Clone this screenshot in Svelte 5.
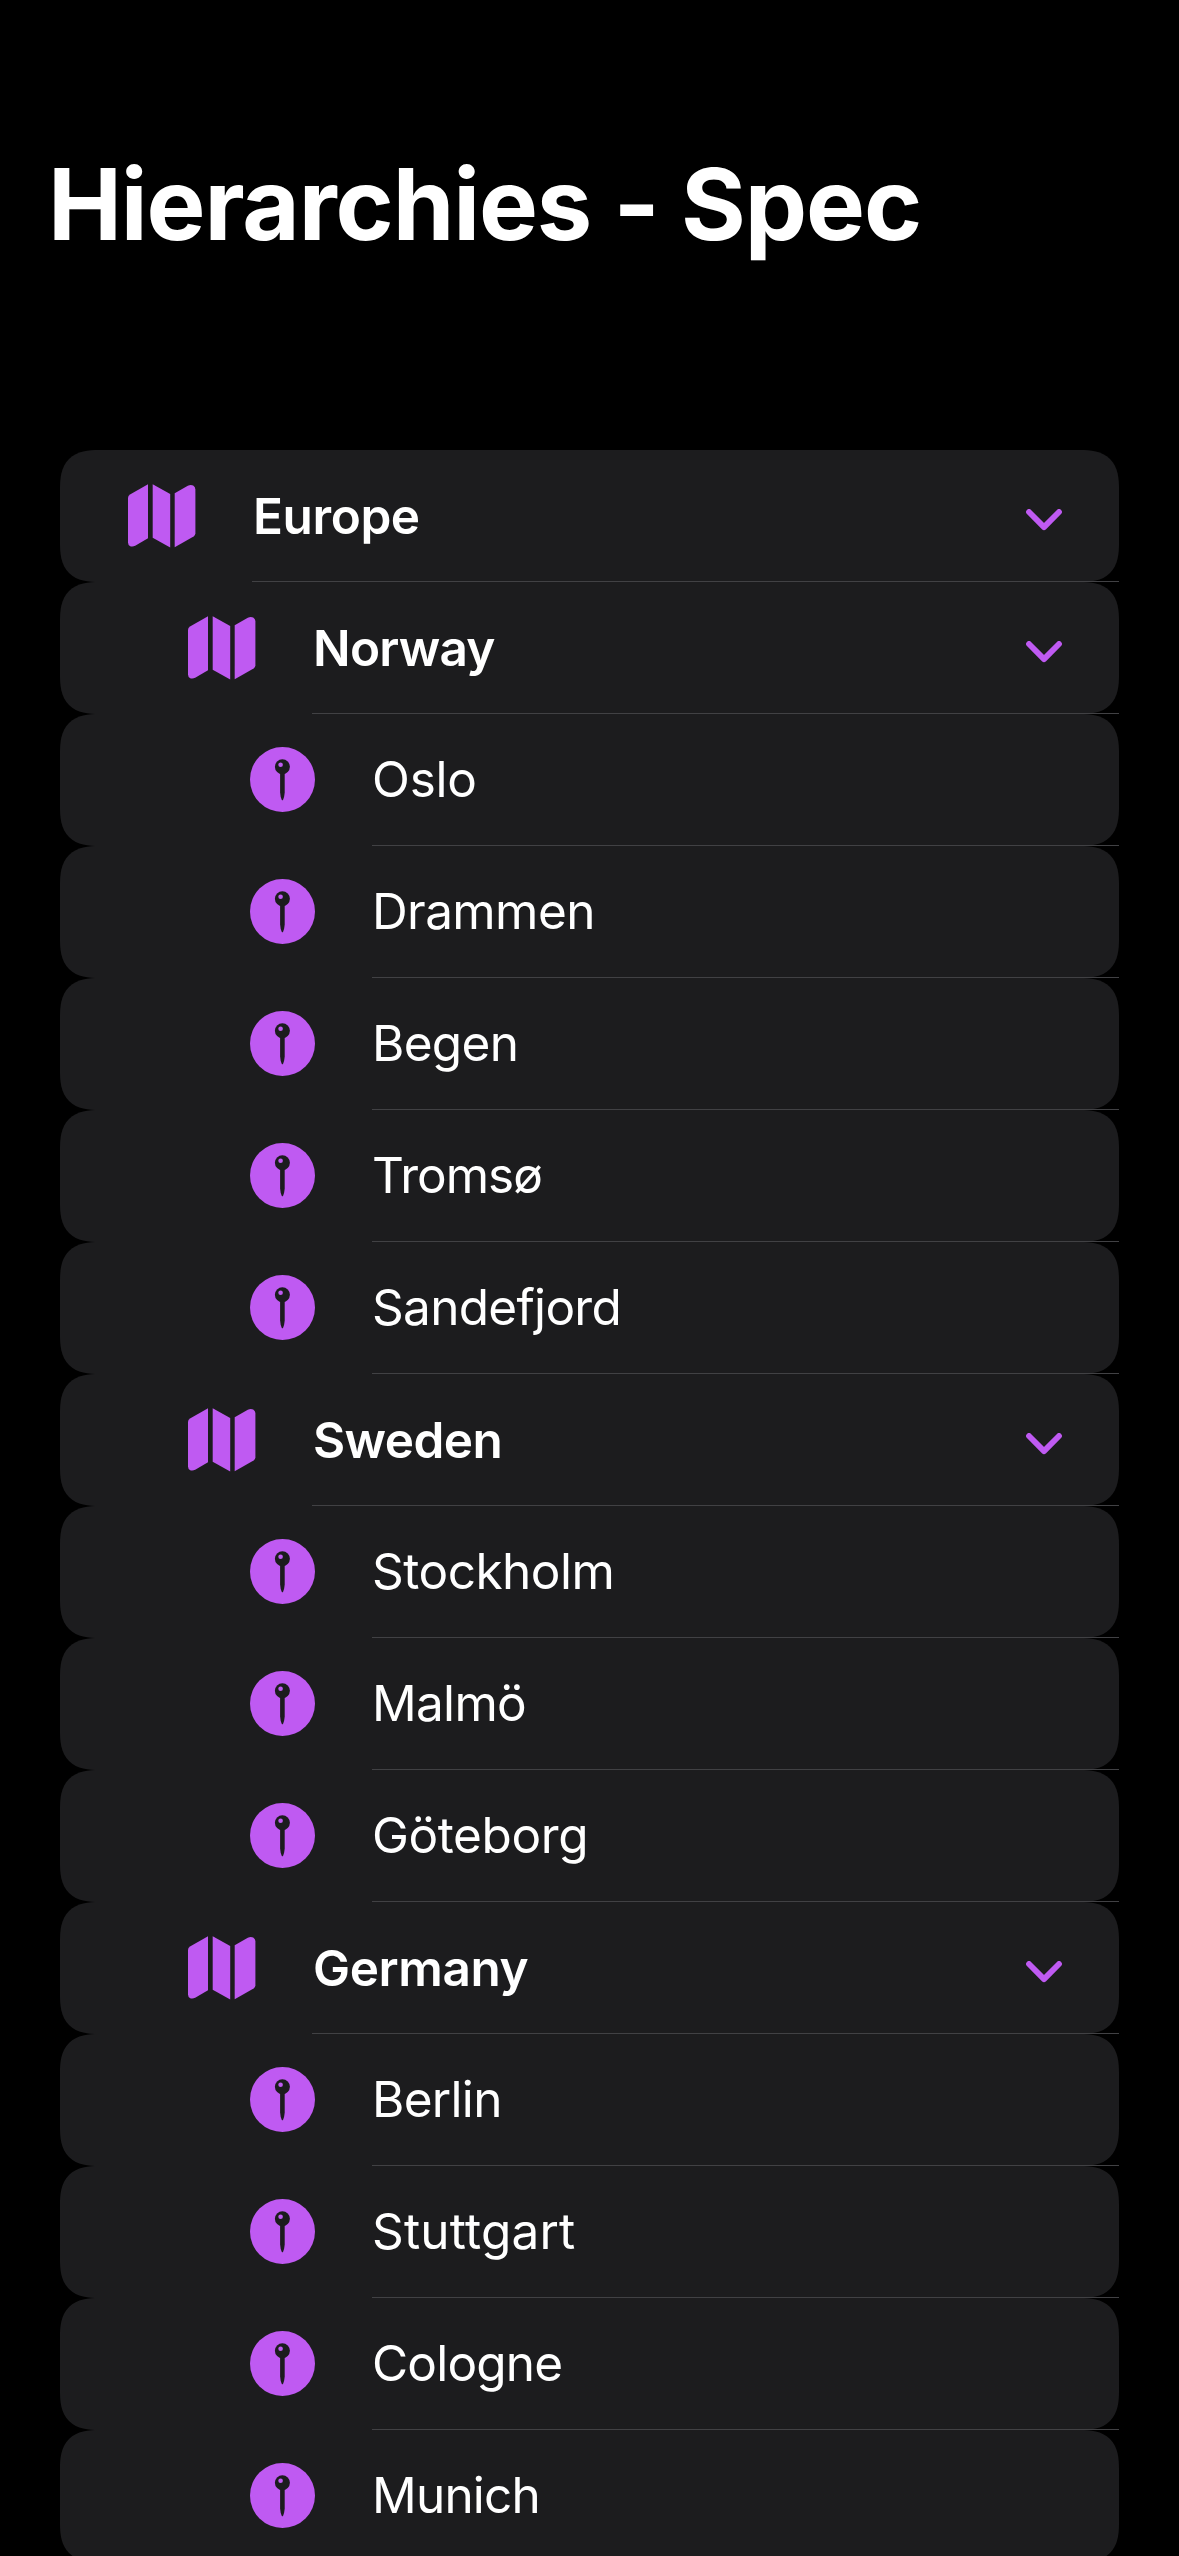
<script>
  const rows = [
    { label: 'Europe', level: 0 },
    { label: 'Norway', level: 1, tracking: -0.3 },
    { label: 'Oslo', level: 2, tracking: 0.5 },
    { label: 'Drammen', level: 2, tracking: 0.1 },
    { label: 'Begen', level: 2 },
    { label: 'Tromsø', level: 2, tracking: -0.3 },
    { label: 'Sandefjord', level: 2 },
    { label: 'Sweden', level: 1, tracking: -0.2 },
    { label: 'Stockholm', level: 2, tracking: 0.2 },
    { label: 'Malmö', level: 2 },
    { label: 'Göteborg', level: 2, tracking: 0.3 },
    { label: 'Germany', level: 1 },
    { label: 'Berlin', level: 2 },
    { label: 'Stuttgart', level: 2, tracking: 0.9 },
    { label: 'Cologne', level: 2, tracking: -0.1 },
    { label: 'Munich', level: 2, tracking: -0.1 },
  ];
</script>

<main class="screen">
  <h1>Hierarchies - Spec</h1>
  <ul class="list">
    {#each rows as row}
      <li class="item level-{row.level}">
        <div class="card">
          <span class="icon">
            {#if row.level < 2}
              <svg width="68" height="64" viewBox="0 0 68 64" fill="currentColor">
                <path d="M20 .2V54.3L7.2 61.8Q4.5 63.2 2.2 62.2Q0 61.2 0 58.5V14Q0 11.8 2 10.6Z" />
                <path d="M24.7 .2L42.2 9.9V63.5L24.7 53.8Z" />
                <path d="M46.7 9.3L59.8 1.8Q62.8 .3 65.2 1.6Q67.4 2.9 67.4 5.5V49.3Q67.4 51.3 65.6 52.4L46.7 63.3Z" />
              </svg>
            {:else}
              <svg class="pin" width="65" height="65" viewBox="0 0 65 65">
                <circle cx="32.5" cy="32.5" r="32.5" fill="currentColor" />
                <circle cx="32.4" cy="19.8" r="7.5" fill="#1c1c1e" />
                <circle cx="30.6" cy="17.8" r="2.3" fill="currentColor" />
                <path d="M30.1 26H34.7V45.5Q34.3 50.5 33.1 52.8Q32.4 53.8 31.7 52.8Q30.5 50.5 30.1 45.5Z" fill="#1c1c1e" />
              </svg>
            {/if}
          </span>
          <span class="label" style="--tracking: {row.tracking ?? 0}px">{row.label}</span>
          {#if row.level < 2}
            <svg class="chevron" width="36" height="22" viewBox="0 0 36 22" fill="none" stroke="currentColor" stroke-width="5.8" stroke-linecap="round" stroke-linejoin="round">
              <path d="M3 3L18 18.1L33 3" />
            </svg>
          {/if}
        </div>
        <div class="separator"></div>
      </li>
    {/each}
  </ul>
</main>

<style>
  :global(body) {
    background: #000;
    overflow: hidden;
  }
  .screen {
    height: 2556px;
    overflow: hidden;
    background: #000;
    color: #fff;
    font-family: Inter, 'Liberation Sans', sans-serif;
    font-variant-ligatures: none;
  }
  h1 {
    margin: 0;
    padding: 144px 0 0 48px;
    height: 306px;
    font-size: 99px;
    line-height: 120px;
    font-weight: 700;
    letter-spacing: -1.1px;
    white-space: nowrap;
  }
  .list {
    list-style: none;
    margin: 0;
    padding: 0 60px;
  }
  .card {
    height: 132px;
    display: flex;
    align-items: center;
    padding: 0 57px 1px 60px;
    box-sizing: border-box;
    background: #1c1c1e;
    border-radius: 32px;
  }
  @supports (corner-shape: superellipse(1.4)) {
    .card {
      border-radius: 39px;
      corner-shape: superellipse(1.4);
    }
  }
  .separator {
    height: 1px;
    margin: -1px 0 0 192px;
    background: #414144;
  }
  .level-1 .card { padding-left: 120px; }
  .level-1 .separator { margin-left: 252px; }
  .level-2 .card { padding-left: 180px; }
  .level-2 .separator { margin-left: 312px; }
  .icon {
    width: 84px;
    margin-right: 49px;
    display: flex;
    justify-content: center;
    color: #bf5af2;
  }
  .level-2 .icon {
    margin-right: 48px;
  }
  .icon svg {
    display: block;
  }
  .label {
    flex: 1;
    font-size: 49.5px;
    line-height: 60px;
    font-weight: 600;
    letter-spacing: calc(-0.4px + var(--tracking));
    white-space: nowrap;
  }
  .level-2 .label {
    font-weight: 400;
    letter-spacing: calc(-0.7px + var(--tracking));
    margin-bottom: 2px;
  }
  .chevron {
    color: #bf5af2;
    margin-top: 8px;
  }
</style>
